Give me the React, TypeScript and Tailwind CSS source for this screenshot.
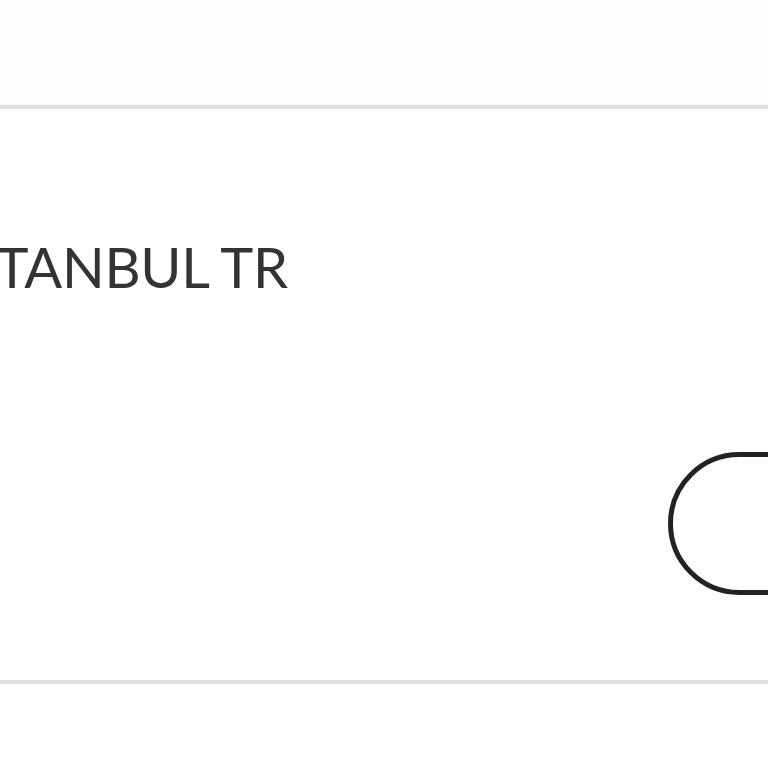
import React from "react";

export default function App() {
  return (
    <div className="w-[768px] h-[768px] overflow-hidden bg-white flex flex-col" style={{ fontFamily: "Lato, 'Open Sans', sans-serif" }}>
      <div className="h-[105px] shrink-0 bg-[#fdfdfd]" />
      <div className="h-[4px] shrink-0 bg-[#e0e0e0]" />
      <div className="h-[571px] shrink-0 relative flex flex-col">
        <div className="pt-[123px] ml-[-50px] whitespace-nowrap text-[56px] leading-[70px] text-[#333] font-normal tracking-[-0.3px]">
          ISTANBUL TR
        </div>
        <div className="flex justify-end mt-[150px] mr-[-200px]">
          <button className="w-[300px] h-[143px] rounded-full border-[5px] border-[#222]" />
        </div>
      </div>
      <div className="h-[4px] shrink-0 bg-[#e0e0e0]" />
      <div className="flex-1 bg-white" />
    </div>
  );
}
